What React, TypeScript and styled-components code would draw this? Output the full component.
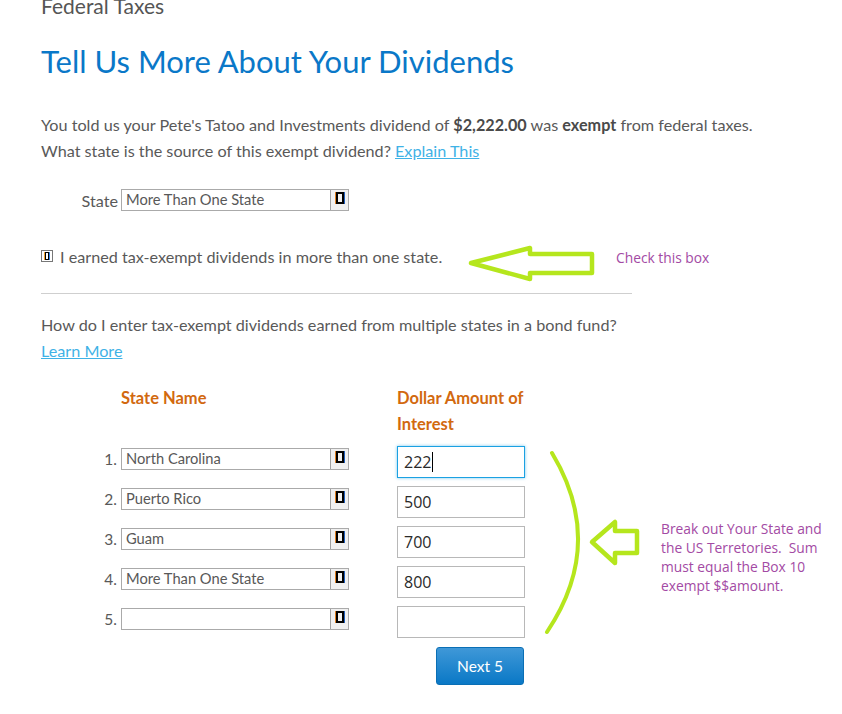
import React from "react";
import styled, { createGlobalStyle } from "styled-components";

const Global = createGlobalStyle`
  html, body { margin: 0; padding: 0; background: #fff; }
  body { font-family: Lato, "Open Sans", sans-serif; color: #595959; }
`;

const Page = styled.div`
  position: relative;
  width: 842px;
  height: 714px;
  overflow: hidden;
  padding-left: 41px;
  box-sizing: border-box;
`;

const TopTitle = styled.div`
  font-size: 21px;
  line-height: 20px;
  margin-top: -4px;
  color: #555;
`;

const Heading = styled.h1`
  margin: 25px 0 0;
  font-size: 31px;
  line-height: 40px;
  font-weight: 400;
  color: #0a78c8;
`;

const Para = styled.p<{ $mt: number }>`
  margin: ${(p) => p.$mt}px 0 0;
  font-size: 16.2px;
  line-height: 26px;
  width: 780px;
  b { color: #4a4a4a; font-weight: 700; }
`;

const Link = styled.a`
  color: #3fb2e6;
  text-decoration: underline;
  cursor: pointer;
`;

const StateRow = styled.div`
  display: flex;
  align-items: center;
  margin-top: 25px;
  height: 22px;
`;

const FieldLabel = styled.span`
  width: 77px;
  text-align: right;
  padding-right: 3px;
  font-size: 16.2px;
  color: #595959;
`;

const Select = styled.div`
  display: flex;
  align-items: stretch;
  width: 228px;
  height: 22px;
  box-sizing: border-box;
  border: 1px solid #aaa;
  background: #fff;
`;

const SelectText = styled.span`
  flex: 1;
  padding-left: 4px;
  font-size: 14.7px;
  line-height: 19px;
  color: #585858;
  white-space: nowrap;
  overflow: hidden;
`;

const SelectButton = styled.span`
  width: 18px;
  background: #f0f0f0;
  border-left: 1px solid #a0a0a0;
  display: flex;
  justify-content: center;
  padding-top: 2px;
  box-sizing: border-box;
`;

const Glyph = styled.span`
  display: block;
  width: 4px;
  height: 8px;
  border: 2px solid #000;
  box-shadow: -1px 0 0 #e08020, 1px 0 0 #2060c0;
`;

const CheckRow = styled.label`
  display: flex;
  align-items: center;
  gap: 7px;
  margin-top: 32px;
  height: 26px;
  font-size: 16.2px;
  color: #595959;
`;

const CheckBox = styled.span`
  width: 12px;
  height: 12px;
  box-sizing: border-box;
  border: 1px solid #777;
  display: flex;
  align-items: center;
  justify-content: center;
`;

const CheckGlyph = styled.span`
  display: block;
  width: 2px;
  height: 6px;
  border: 1px solid #000;
  box-shadow: -1px 0 0 #f0a030, 1px 0 0 #3080e0;
`;

const Rule = styled.hr`
  margin: 24px 0 0;
  width: 591px;
  border: none;
  border-top: 1px solid #cfcfcf;
  height: 0;
`;

const TableHead = styled.div`
  display: flex;
  margin-top: 21px;
  padding-left: 80px;
`;

const ColHead = styled.div<{ $w: number }>`
  width: ${(p) => p.$w}px;
  font-size: 16.5px;
  line-height: 26px;
  font-weight: 700;
  color: #d2690f;
`;

const Rows = styled.div`
  display: flex;
  flex-direction: column;
  gap: 8px;
  margin-top: 9px;
`;

const Row = styled.div`
  display: flex;
  align-items: flex-start;
  height: 32px;
`;

const Num = styled.span`
  width: 76px;
  padding-right: 4px;
  text-align: right;
  font-size: 15.5px;
  line-height: 22px;
  margin-top: 2px;
  color: #595959;
`;

const RowSelect = styled(Select)`
  margin-top: 2px;
`;

const AmountInput = styled.div<{ $focus?: boolean }>`
  margin-left: 48px;
  width: 128px;
  height: 32px;
  box-sizing: border-box;
  border: 1px solid ${(p) => (p.$focus ? "#1ba1e2" : "#b8b8b8")};
  box-shadow: ${(p) => (p.$focus ? "0 0 3px rgba(27,161,226,0.6)" : "none")};
  padding-left: 6px;
  font-family: "Open Sans", Lato, sans-serif;
  font-size: 16px;
  line-height: 30px;
  color: #2a2a2a;
  display: flex;
  align-items: center;
`;

const Caret = styled.span`
  display: inline-block;
  width: 1px;
  height: 20px;
  background: #000;
  margin-left: 1px;
`;

const ButtonRow = styled.div`
  display: flex;
  justify-content: flex-end;
  width: 483px;
  margin-top: 9px;
`;

const Button = styled.button`
  width: 88px;
  height: 38px;
  border: 1px solid #0a6fb5;
  border-radius: 3px;
  background: linear-gradient(#3f98d8, #0a78c6);
  color: #fff;
  font-family: Lato, sans-serif;
  font-size: 15.5px;
`;

const Annotations = styled.svg`
  position: absolute;
  left: 0;
  top: 0;
  pointer-events: none;
`;

const Note = styled.div<{ $x: number; $y: number }>`
  position: absolute;
  left: ${(p) => p.$x}px;
  top: ${(p) => p.$y}px;
  font-family: "Open Sans", sans-serif;
  font-size: 13.8px;
  line-height: 19px;
  color: #a34aa4;
  white-space: pre;
`;

const rows = [
  { n: "1.", s: "North Carolina", v: "222", focus: true },
  { n: "2.", s: "Puerto Rico", v: "500" },
  { n: "3.", s: "Guam", v: "700" },
  { n: "4.", s: "More Than One State", v: "800" },
  { n: "5.", s: "", v: "" },
];

export default function App() {
  return (
    <Page>
      <Global />
      <TopTitle>Federal Taxes</TopTitle>
      <Heading>Tell Us More About Your Dividends</Heading>
      <Para $mt={31}>
        You told us your Pete's Tatoo and Investments dividend of <b>$2,222.00</b> was <b>exempt</b> from federal taxes.
        <br />
        What state is the source of this exempt dividend? <Link>Explain This</Link>
      </Para>
      <StateRow>
        <FieldLabel>State</FieldLabel>
        <Select>
          <SelectText>More Than One State</SelectText>
          <SelectButton>
            <Glyph />
          </SelectButton>
        </Select>
      </StateRow>
      <CheckRow>
        <CheckBox>
          <CheckGlyph />
        </CheckBox>
        I earned tax-exempt dividends in more than one state.
      </CheckRow>
      <Rule />
      <Para $mt={18}>
        How do I enter tax-exempt dividends earned from multiple states in a bond fund?
        <br />
        <Link>Learn More</Link>
      </Para>
      <TableHead>
        <ColHead $w={276}>State Name</ColHead>
        <ColHead $w={132}>Dollar Amount of Interest</ColHead>
      </TableHead>
      <Rows>
        {rows.map((r) => (
          <Row key={r.n}>
            <Num>{r.n}</Num>
            <RowSelect>
              <SelectText>{r.s}</SelectText>
              <SelectButton>
                <Glyph />
              </SelectButton>
            </RowSelect>
            <AmountInput $focus={r.focus}>
              {r.v}
              {r.focus && <Caret />}
            </AmountInput>
          </Row>
        ))}
      </Rows>
      <ButtonRow>
        <Button>Next 5</Button>
      </ButtonRow>

      <Annotations width={842} height={714} viewBox="0 0 842 714">
        <polygon
          points="471,263 530,248 530,254 592,254 592,273 530,273 530,279"
          fill="none"
          stroke="#b5e61d"
          strokeWidth={4.5}
          strokeLinejoin="round"
        />
        <path d="M552 453 Q606.5 543.5 547 632" fill="none" stroke="#b5e61d" strokeWidth={4} strokeLinecap="round" />
        <polygon
          points="592,542 615,522 615,531 637,531 637,553 615,553 615,563"
          fill="none"
          stroke="#b5e61d"
          strokeWidth={4.5}
          strokeLinejoin="round"
        />
      </Annotations>
      <Note $x={616} $y={248}>Check this box</Note>
      <Note $x={661} $y={519}>
        {"Break out Your State and\nthe US Terretories.  Sum\nmust equal the Box 10\nexempt $$amount."}
      </Note>
    </Page>
  );
}
